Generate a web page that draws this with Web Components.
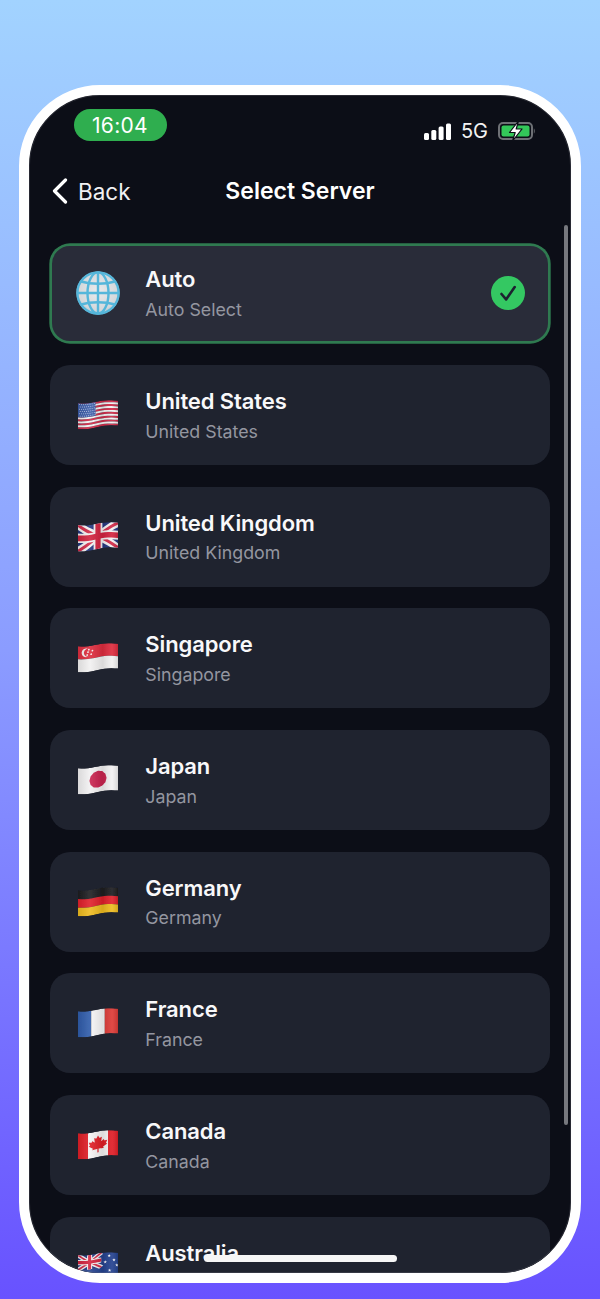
<!DOCTYPE html>
<html lang="en">
<head>
<meta charset="utf-8">
<title>Select Server</title>
<style>
html, body { margin: 0; height: 1299px; overflow: hidden; }
body {
  background: linear-gradient(180deg, #a2d3ff 0%, #8b9cff 50%, #6852ff 100%);
  font-family: Inter, "Liberation Sans", sans-serif;
}
</style>
</head>
<body>
<phone-frame>
  <status-bar slot="top" time="16:04" network="5G"></status-bar>
  <nav-header slot="top" title="Select Server" back="Back"></nav-header>
  <server-card name="Auto" sub="Auto Select" selected><globe-icon slot="icon"></globe-icon></server-card>
  <server-card name="United States" sub="United States"><flag-icon slot="icon" code="us"></flag-icon></server-card>
  <server-card name="United Kingdom" sub="United Kingdom"><flag-icon slot="icon" code="gb"></flag-icon></server-card>
  <server-card name="Singapore" sub="Singapore"><flag-icon slot="icon" code="sg"></flag-icon></server-card>
  <server-card name="Japan" sub="Japan"><flag-icon slot="icon" code="jp"></flag-icon></server-card>
  <server-card name="Germany" sub="Germany"><flag-icon slot="icon" code="de"></flag-icon></server-card>
  <server-card name="France" sub="France"><flag-icon slot="icon" code="fr"></flag-icon></server-card>
  <server-card name="Canada" sub="Canada"><flag-icon slot="icon" code="ca"></flag-icon></server-card>
  <server-card name="Australia"><flag-icon slot="icon" code="au"></flag-icon></server-card>
</phone-frame>

<script>
const frameTemplate = document.createElement("template");
frameTemplate.innerHTML = `
<style>
:host {
  display: block;
  box-sizing: border-box;
  position: relative;
  margin: 85px 19px 0;
  height: 1198px;
  border: 10px solid #fff;
  border-radius: 81px;
  background: #0c0e17;
  overflow: hidden;
  font-family: Inter, "Liberation Sans", sans-serif;
}
.list {
  display: flex;
  flex-direction: column;
  gap: 21.77px;
  padding: 0 21px;
}
.scrollbar {
  position: absolute;
  top: 130px;
  left: 535px;
  width: 4px;
  height: 900px;
  border-radius: 2px;
  background: #77787e;
}
.home {
  position: absolute;
  top: 1160px;
  left: 175px;
  width: 193px;
  height: 7px;
  border-radius: 4px;
  background: #f6f6f6;
}
.edge {
  position: absolute;
  inset: 0;
  border-radius: 71px;
  box-shadow: inset 0 0 0 1px rgba(125, 125, 135, .25);
  pointer-events: none;
}
</style>
<slot name="top"></slot>
<div class="list"><slot></slot></div>
<div class="scrollbar"></div>
<div class="home"></div>
<div class="edge"></div>
`;
class PhoneFrame extends HTMLElement {
  constructor() {
    super();
    this.attachShadow({ mode: "open" }).appendChild(frameTemplate.content.cloneNode(true));
  }
}
customElements.define("phone-frame", PhoneFrame);

const statusTemplate = document.createElement("template");
statusTemplate.innerHTML = `
<style>
:host {
  display: flex;
  justify-content: space-between;
  align-items: flex-start;
  padding: 14px 35px 0 44.500px;
  height: 46px;
  box-sizing: border-box;
  color: #fff;
}
.time {
  width: 93px;
  height: 32px;
  border-radius: 16px;
  background: #2fae4f;
  display: flex;
  align-items: center;
  justify-content: center;
  font-size: 21px;
  letter-spacing: .3px;
}
.right {
  display: flex;
  align-items: center;
  margin-top: 12px;
  height: 20px;
}
.net { font-size: 20px; margin: 0 10px 0 9.5px; color: #f2f2f2; }
svg { display: block; }
</style>
<div class="time"></div>
<div class="right">
  <svg width="27" height="18" viewBox="0 0 27 18"><g fill="#fff"><rect x="0" y="11" width="5" height="7" rx="1.5"/><rect x="7.3" y="8" width="5" height="10" rx="1.5"/><rect x="14.6" y="4.500" width="5" height="13.500" rx="1.5"/><rect x="22" y="1.500" width="5" height="16.500" rx="1.5"/></g></svg>
  <span class="net"></span>
  <svg width="38" height="20" viewBox="0 0 38 20">
    <rect x="1" y="2" width="33" height="16" rx="4" fill="none" stroke="#6e7075" stroke-width="2"/>
    <rect x="3.5" y="4.500" width="28" height="11" rx="2" fill="#33c759"/>
    <path d="M35.8 7.5c1.3.4 1.3 4.6 0 5z" fill="#6e7075"/>
    <path d="M20.5 0 11.5 11.5h5.7L14.5 20l9.5-12h-5.8z" fill="#fff" stroke="#0c0e17" stroke-width="1.2" stroke-linejoin="round"/>
  </svg>
</div>
`;
class StatusBar extends HTMLElement {
  constructor() {
    super();
    const shadow = this.attachShadow({ mode: "open" });
    shadow.appendChild(statusTemplate.content.cloneNode(true));
    shadow.querySelector(".time").textContent = this.getAttribute("time");
    shadow.querySelector(".net").textContent = this.getAttribute("network");
  }
}
customElements.define("status-bar", StatusBar);

const navTemplate = document.createElement("template");
navTemplate.innerHTML = `
<style>
:host {
  display: grid;
  grid-template-columns: 1fr auto 1fr;
  align-items: center;
  height: 102.5px;
  padding-bottom: 2.5px;
  box-sizing: border-box;
  color: #fff;
}
.back {
  display: flex;
  align-items: center;
  gap: 10px;
  padding-left: 23px;
  font-size: 22.5px;
  color: #f1f1f3;
}
.back svg { display: block; }
h1 { margin: 1px 0 0; font-size: 23px; font-weight: 600; line-height: 1.2; }
</style>
<div class="back">
  <svg width="16" height="26" viewBox="0 0 16 26"><path d="M13.5 2 2.5 13l11 11" fill="none" stroke="#fff" stroke-width="3.2" stroke-linecap="round" stroke-linejoin="round"/></svg>
  <span class="label"></span>
</div>
<h1></h1>
<div></div>
`;
class NavHeader extends HTMLElement {
  constructor() {
    super();
    const shadow = this.attachShadow({ mode: "open" });
    shadow.appendChild(navTemplate.content.cloneNode(true));
    shadow.querySelector(".label").textContent = this.getAttribute("back");
    shadow.querySelector("h1").textContent = this.getAttribute("title");
  }
}
customElements.define("nav-header", NavHeader);

const cardTemplate = document.createElement("template");
cardTemplate.innerHTML = `
<style>
:host {
  display: flex;
  align-items: center;
  flex: none;
  box-sizing: border-box;
  height: 99.900px;
  padding: 0 23px 0 24px;
  border: 2px solid transparent;
  border-radius: 20px;
  background: #1f232f;
}
:host([selected]) {
  background: #292c39;
  border-color: #2f7a50;
  box-shadow: 0 0 0 .7px #2f7a50;
}
.icon { width: 44px; display: flex; justify-content: center; flex: none; }
.text { flex: 1; margin-left: 25.3px; padding-top: .5px; }
.name { font-size: 22px; font-weight: 600; line-height: 28px; color: #f8f8fa; letter-spacing: -.1px; }
.sub { font-size: 17.8px; line-height: 24px; min-height: 24px; margin-top: 4.5px; color: #9496a0; }
.check { display: none; flex: none; }
:host([selected]) .check { display: block; }
</style>
<div class="icon"><slot name="icon"></slot></div>
<div class="text">
  <div class="name"></div>
  <div class="sub"></div>
</div>
<svg class="check" width="34" height="34" viewBox="0 0 34 34">
  <circle cx="17" cy="17" r="17" fill="#34c862"/>
  <path d="M10.5 18l4.6 5.4 8.6-12.4" fill="none" stroke="#1c2230" stroke-width="2.6" stroke-linecap="round" stroke-linejoin="round"/>
</svg>
`;
class ServerCard extends HTMLElement {
  constructor() {
    super();
    const shadow = this.attachShadow({ mode: "open" });
    shadow.appendChild(cardTemplate.content.cloneNode(true));
    shadow.querySelector(".name").textContent = this.getAttribute("name");
    shadow.querySelector(".sub").textContent = this.getAttribute("sub") || "";
  }
}
customElements.define("server-card", ServerCard);

const globeTemplate = document.createElement("template");
globeTemplate.innerHTML = `
<style>
:host { display: block; width: 44px; height: 44px; }
svg { display: block; }
</style>
<svg width="44" height="44" viewBox="0 0 44 44">
  <defs>
    <radialGradient id="g" cx=".5" cy=".45" r=".6">
      <stop offset="0" stop-color="#e9eaec"/><stop offset=".75" stop-color="#d4d8db"/><stop offset="1" stop-color="#8fb8cc"/>
    </radialGradient>
  </defs>
  <circle cx="22" cy="22" r="21.5" fill="url(#g)"/>
  <g fill="none" stroke="#55b6da" stroke-width="2.4">
    <circle cx="22" cy="22" r="20.6"/>
    <ellipse cx="22" cy="22" rx="10.5" ry="20.6"/>
    <path d="M22 1.5v41M1.5 22h41"/>
    <path d="M5 10.5c10 3 24 3 34 0M5 33.500c10-3 24-3 34 0"/>
  </g>
</svg>
`;
class GlobeIcon extends HTMLElement {
  constructor() {
    super();
    this.attachShadow({ mode: "open" }).appendChild(globeTemplate.content.cloneNode(true));
  }
}
customElements.define("globe-icon", GlobeIcon);

// flags are drawn flat in 0..1 coordinates and pushed through the wave
const FW = 40, FH = 26;
function warp(u, v) {
  const y = 4 - 2.6 * u + .9 * Math.sin(u * 6.28 + .3) + v * FH * (1 - .04 * u);
  return [(1 + u * FW).toFixed(2), y.toFixed(2)];
}
function poly(points, fill, extra = "") {
  const out = [];
  points.forEach((p, i) => {
    const q = points[(i + 1) % points.length];
    for (let s = 0; s < 12; s++) {
      const t = s / 12;
      out.push(warp(p[0] + (q[0] - p[0]) * t, p[1] + (q[1] - p[1]) * t).join(","));
    }
  });
  return `<polygon points="${out.join(" ")}" fill="${fill}" ${extra}/>`;
}
const box = (u0, v0, u1, v1, fill) => poly([[u0, v0], [u1, v0], [u1, v1], [u0, v1]], fill);
function dot(u, v, r, fill) {
  const pts = [];
  for (let i = 0; i < 12; i++) {
    const a = i / 12 * 6.283;
    pts.push([u + Math.cos(a) * r * FH / FW, v + Math.sin(a) * r]);
  }
  return poly(pts, fill);
}
function star(u, v, r, fill) {
  const pts = [];
  for (let i = 0; i < 10; i++) {
    const a = i / 10 * 6.283 - 1.571, k = i % 2 ? r * .42 : r;
    pts.push([u + Math.cos(a) * k * FH / FW, v + Math.sin(a) * k]);
  }
  return poly(pts, fill);
}
function union(x1, y1, x2, y2) {
  // jack drawn inside the canton x1..x2, y1..y2
  const mx = (x1 + x2) / 2, my = (y1 + y2) / 2, w = x2 - x1, h = y2 - y1;
  const diag = (a, b, c, d, k, fill) => {
    const dx = k * w, dy = k * h;
    return poly([[a - dx, b + dy], [a + dx, b - dy], [c + dx, d - dy], [c - dx, d + dy]], fill);
  };
  const diag2 = (a, b, c, d, k, fill) => {
    const dx = k * w, dy = k * h;
    return poly([[a - dx, b - dy], [a + dx, b + dy], [c + dx, d + dy], [c - dx, d - dy]], fill);
  };
  return box(x1, y1, x2, y2, "#24367e")
    + diag(x1, y1, x2, y2, .09, "#f4f1f1") + diag2(x1, y2, x2, y1, .09, "#f4f1f1")
    + diag(x1, y1, x2, y2, .035, "#d22a48") + diag2(x1, y2, x2, y1, .035, "#d22a48")
    + box(mx - .11 * w, y1, mx + .11 * w, y2, "#f4f1f1") + box(x1, my - .18 * h, x2, my + .18 * h, "#f4f1f1")
    + box(mx - .065 * w, y1, mx + .065 * w, y2, "#d2233f") + box(x1, my - .11 * h, x2, my + .11 * h, "#d2233f");
}
const FLAGS = {
  us() {
    let s = "";
    for (let i = 0; i < 7; i++) s += box(0, i * 2 / 13, 1, (i * 2 + 1) / 13, "#cf2a48");
    for (let i = 0; i < 6; i++) s += box(0, (i * 2 + 1) / 13, 1, (i * 2 + 2) / 13, "#f5f1f2");
    s += box(0, 0, .44, 7 / 13, "#3a5ba8");
    for (let r = 0; r < 6; r++) for (let c = 0; c < 8; c++) s += dot(.035 + c * .053 + (r % 2) * .02, .05 + r * .088, .018, "#dfe6f5");
    return s;
  },
  gb: () => union(0, 0, 1, 1),
  sg() {
    let s = box(0, 0, 1, .5, "#de2c3e") + box(0, .5, 1, 1, "#f2f1f1");
    s += dot(.2, .25, .17, "#f5f1f1") + dot(.25, .25, .16, "#de2c3e");
    [[.27, .14], [.36, .2], [.33, .33], [.23, .34], [.25, .23]].forEach(p => s += dot(p[0], p[1], .035, "#f5f1f1"));
    return s;
  },
  jp: () => box(0, 0, 1, 1, "#f2f1f2") + dot(.5, .5, .33, "#c9234f"),
  de: () => box(0, 0, 1, .34, "#1d1d20") + box(0, .34, 1, .67, "#e0202a") + box(0, .67, 1, 1, "#eebb1f"),
  fr: () => box(0, 0, .33, 1, "#2f5cab") + box(.33, 0, .67, 1, "#f7f6f7") + box(.67, 0, 1, 1, "#dc3a36"),
  ca() {
    const leaf = [[.5,.1],[.55,.23],[.62,.19],[.6,.4],[.68,.31],[.7,.38],[.79,.36],[.75,.5],[.79,.54],[.66,.66],[.68,.73],[.52,.71],[.52,.88],[.48,.88],[.48,.71],[.32,.73],[.34,.66],[.21,.54],[.25,.5],[.21,.36],[.3,.38],[.32,.31],[.4,.4],[.38,.19],[.45,.23]]
      .map(p => [.5 + (p[0] - .5) * .8, .48 + (p[1] - .48) * .85]);
    return box(0, 0, .25, 1, "#e01e26") + box(.25, 0, .75, 1, "#f5f3f3") + box(.75, 0, 1, 1, "#e01e26") + poly(leaf, "#e01e26");
  },
  au() {
    let s = box(0, 0, 1, 1, "#24428f") + union(0, 0, .58, .56);
    [[.78, .14], [.9, .3], [.68, .38], [.79, .72], [.97, .5]].forEach(p => s += star(p[0], p[1], .07, "#f4f4f8"));
    s += star(.28, .8, .11, "#f4f4f8");
    return s;
  }
};
class FlagIcon extends HTMLElement {
  constructor() {
    super();
    const draw = FLAGS[this.getAttribute("code")];
    const shape = box(0, 0, 1, 1, "#fff");
    const shade = box(0, 0, 1, 1, "url(#shade)");
    this.attachShadow({ mode: "open" }).innerHTML = `
<style>
:host { display: block; width: 42px; height: 32px; }
svg { display: block; }
</style>
<svg width="42" height="32" viewBox="0 0 42 32">
  <defs>
    <linearGradient id="shade" x1="0" x2="1" y1="0" y2="0">
      <stop offset="0" stop-color="#000" stop-opacity=".1"/>
      <stop offset=".3" stop-color="#fff" stop-opacity=".1"/>
      <stop offset=".62" stop-color="#000" stop-opacity=".1"/>
      <stop offset=".85" stop-color="#fff" stop-opacity=".08"/>
      <stop offset="1" stop-color="#000" stop-opacity=".12"/>
    </linearGradient>
    <clipPath id="clip">${shape}</clipPath>
    <filter id="soft" x="-5%" y="-5%" width="110%" height="110%"><feGaussianBlur stdDeviation=".35"/></filter>
  </defs>
  <g filter="url(#soft)">
    <g clip-path="url(#clip)">${draw()}${shade}</g>
  </g>
</svg>`;
  }
}
customElements.define("flag-icon", FlagIcon);
</script>
</body>
</html>
